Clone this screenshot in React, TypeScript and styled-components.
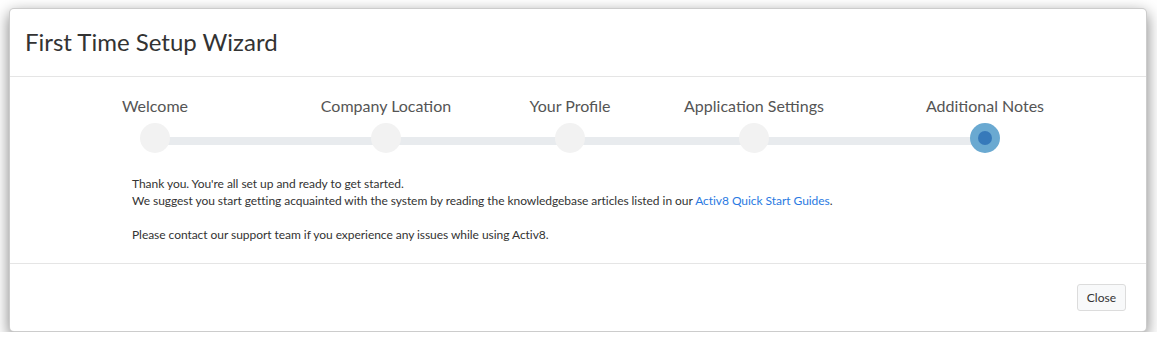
import React from "react";
import styled, { createGlobalStyle } from "styled-components";

const GlobalStyle = createGlobalStyle`
  html, body { margin: 0; padding: 0; background: #ffffff; }
  body { font-family: Lato, "Open Sans", sans-serif; color: #333; }
  * { box-sizing: border-box; }
`;

const Page = styled.div`
  padding: 8px 10px 0 9px;
`;

const Modal = styled.div`
  width: 1138px;
  background: #fff;
  border: 1px solid rgba(0, 0, 0, 0.2);
  border-radius: 5px;
  box-shadow: 0 5px 15px rgba(0, 0, 0, 0.5);
  display: flex;
  flex-direction: column;
`;

const Header = styled.div`
  padding: 14px 15px 16px;
  border-bottom: 1px solid #e5e5e5;
`;

const Title = styled.h4`
  margin: 0;
  font-family: Lato, sans-serif;
  font-weight: 400;
  font-size: 24px;
  line-height: 37px;
  color: #333;
`;

const Body = styled.div`
  padding: 17px 15px 20px;
`;

const Stepper = styled.div`
  position: relative;
  display: grid;
  grid-template-columns: 260px 202px 166px 202px 260px;
`;

const Track = styled.div`
  position: absolute;
  left: 130px;
  width: 830px;
  top: 43px;
  height: 8px;
  background: #e8ebee;
`;

const Step = styled.div`
  display: flex;
  flex-direction: column;
  align-items: center;
  position: relative;
  z-index: 1;
`;

const StepLabel = styled.div`
  font-size: 16px;
  line-height: 23px;
  color: #555;
  white-space: nowrap;
`;

const Dot = styled.div<{ $active?: boolean }>`
  margin-top: 6px;
  width: 30px;
  height: 30px;
  border-radius: 50%;
  background: ${(p) => (p.$active ? "#6aa9d1" : "#f2f2f2")};
  display: flex;
  align-items: center;
  justify-content: center;
`;

const Inner = styled.div`
  width: 14px;
  height: 14px;
  border-radius: 50%;
  background: #3679ba;
`;

const Message = styled.div`
  margin-top: 22px;
  padding-left: 107px;
  font-size: 12px;
  line-height: 17px;
  letter-spacing: -0.05px;
  color: #333;
`;

const Para = styled.p`
  margin: 0;
`;

const Link = styled.a`
  color: #2a7ae2;
  text-decoration: none;
`;

const Footer = styled.div`
  padding: 20px 20px 20px;
  border-top: 1px solid #e5e5e5;
  display: flex;
  justify-content: flex-end;
`;

const Button = styled.button`
  font-family: Lato, sans-serif;
  font-size: 12px;
  line-height: 17px;
  padding: 4px 9px;
  color: #333;
  background: #f8f9fa;
  border: 1px solid #dcdcdc;
  border-radius: 3px;
`;

const steps = [
  "Welcome",
  "Company Location",
  "Your Profile",
  "Application Settings",
  "Additional Notes",
];

export default function App() {
  return (
    <>
      <GlobalStyle />
      <Page>
        <Modal>
          <Header>
            <Title>First Time Setup Wizard</Title>
          </Header>
          <Body>
            <Stepper>
              <Track />
              {steps.map((s, i) => {
                const active = i === steps.length - 1;
                return (
                  <Step key={s}>
                    <StepLabel>{s}</StepLabel>
                    <Dot $active={active}>{active && <Inner />}</Dot>
                  </Step>
                );
              })}
            </Stepper>
            <Message>
              <Para>Thank you. You're all set up and ready to get started.</Para>
              <Para>
                We suggest you start getting acquainted with the system by reading the
                knowledgebase articles listed in our{" "}
                <Link href="#">Activ8 Quick Start Guides</Link>.
              </Para>
              <Para>&nbsp;</Para>
              <Para>Please contact our support team if you experience any issues while using Activ8.</Para>
            </Message>
          </Body>
          <Footer>
            <Button>Close</Button>
          </Footer>
        </Modal>
      </Page>
    </>
  );
}
